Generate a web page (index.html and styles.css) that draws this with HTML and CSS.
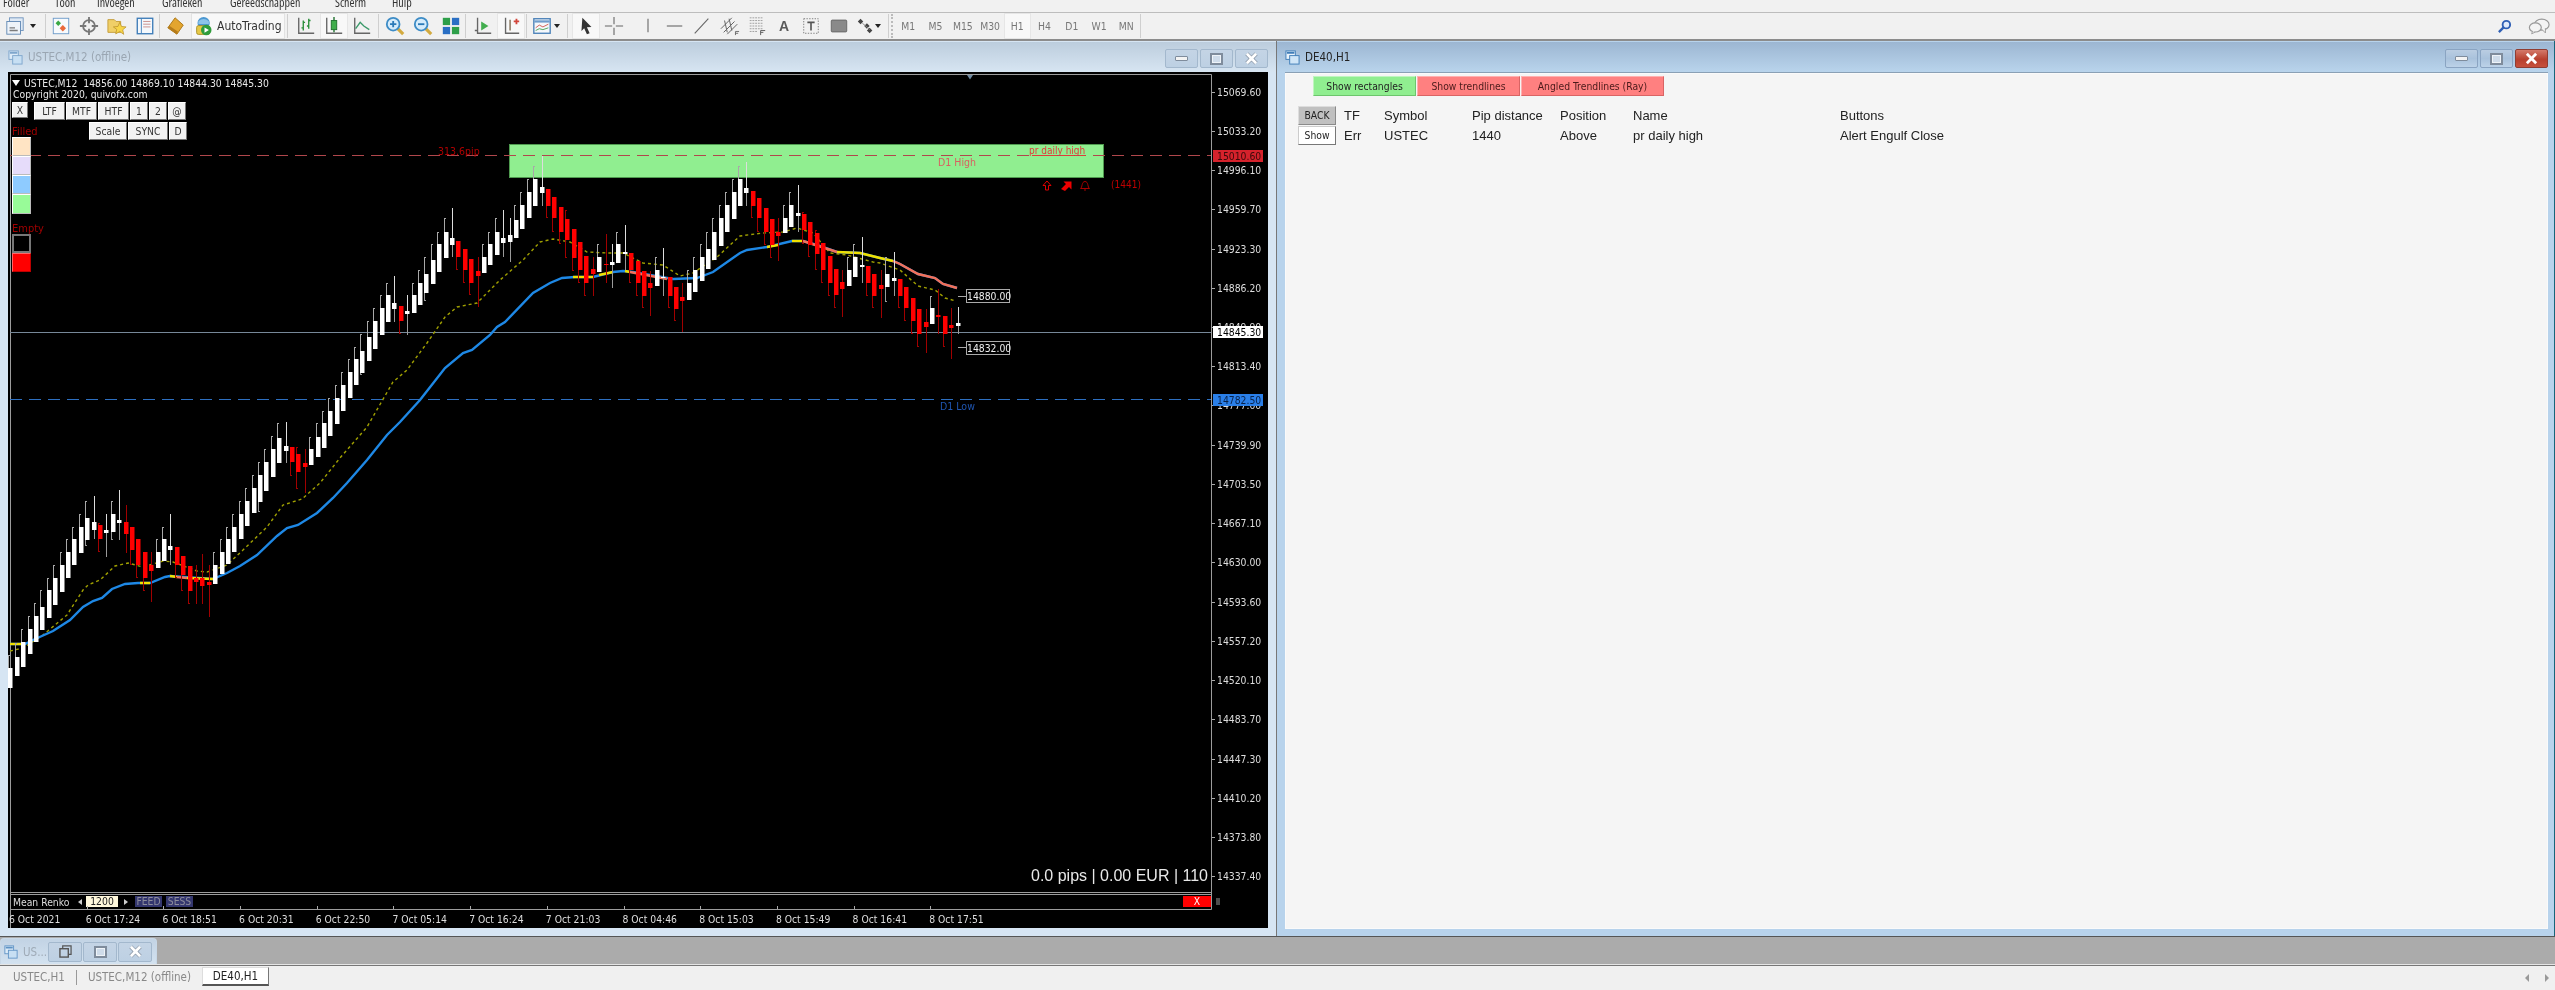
FILE: index.html
```html
<!DOCTYPE html>
<html lang="nl">
<head>
<meta charset="utf-8">
<title>MetaTrader</title>
<link rel="stylesheet" href="styles.css">
</head>
<body>
<div class="app">
  <nav class="menubar"><span class="m1">Folder</span><span class="m2">Toon</span><span class="m3">Invoegen</span><span class="m4">Grafieken</span><span class="m5">Gereedschappen</span><span class="m6">Scherm</span><span class="m7">Hulp</span></nav>

  <div class="toolbar">
    <span class="tb tb-first"><svg viewBox="0 0 22 22"><rect x="5" y="2" width="15" height="14" fill="#dfe9f5" stroke="#6f94bd"/><rect x="2" y="6" width="15" height="14" fill="#eef3f9" stroke="#5f87b3"/><path d="M5 16h9M5 13h6" stroke="#7c7c7c" stroke-width="1.5"/></svg></span>
    <span class="caret"></span><span class="sep s1"></span>
    <span class="tb"><svg viewBox="0 0 22 22"><rect x="2.5" y="2.5" width="17" height="17" fill="#f7fafd" stroke="#6b9ac9"/><path d="M8 5l3 3-3 3-3-3z" fill="#39a845"/><path d="M13 10l3.5 3.5L13 17l-3.500-3.500z" fill="#ea6a3b"/></svg></span>
    <span class="tb"><svg viewBox="0 0 22 22"><circle cx="11" cy="11" r="6.500" fill="none" stroke="#777" stroke-width="2"/><path d="M11 1v7M11 14v7M1 11h7M14 11h7" stroke="#777" stroke-width="2"/></svg></span>
    <span class="tb"><svg viewBox="0 0 22 22"><path d="M1 4h7l2 2h5v12H1z" fill="#f0cf67" stroke="#c39a35"/><path d="M14 7l2 4.500 5 .5-3.700 3.200 1.100 5L14 17l-4.400 2.700 1.100-5L7 12l5-.5z" fill="#f7d548" stroke="#b98f26" stroke-width=".8"/></svg></span>
    <span class="tb"><svg viewBox="0 0 22 22"><rect x="2.500" y="2.500" width="17" height="17" fill="#f4f8fc" stroke="#3f7db8" stroke-width="1.500"/><path d="M7 3v16" stroke="#3f7db8"/><path d="M9 6h8M9 9h8M9 12h8" stroke="#c98a86"/></svg></span>
    <span class="sep s2"></span>
    <span class="tb tb-gold"><svg viewBox="0 0 22 22"><path d="M2 13l8-11 9 8-7 10z" fill="#e3a52f" stroke="#a97413"/><path d="M2 13l10 7 1-3-9-6z" fill="#b67c1b"/></svg></span>
    <span class="auto"><svg viewBox="0 0 24 24"><circle cx="11" cy="8" r="7" fill="#4a97d1"/><path d="M5 6q6-5 12 0v3H5z" fill="#8cc3ea"/><rect x="3" y="11" width="15" height="10" rx="2" fill="#e7c948" stroke="#a58c22"/><circle cx="14" cy="16" r="6" fill="#2f9d3c"/><path d="M12 13l5 3-5 3z" fill="#fff"/></svg><span>AutoTrading</span></span>
    <span class="sep s3"></span>
    <span class="tb"><svg viewBox="0 0 22 22"><path d="M3 2v17h17" fill="none" stroke="#666" stroke-width="1.500"/><path d="M8 5v11M6 13h2M8 7h2M14 3v11M12 11h2M14 5h2" fill="none" stroke="#2a8f3a" stroke-width="1.500"/></svg></span>
    <span class="tb tb-on"><svg viewBox="0 0 22 22"><path d="M3 2v17h17" fill="none" stroke="#666" stroke-width="1.500"/><rect x="8" y="5" width="6" height="10" fill="#3fae4b" stroke="#1d6f2b"/><path d="M11 1v4M11 15v3" stroke="#1d6f2b" stroke-width="1.500"/></svg></span>
    <span class="tb"><svg viewBox="0 0 22 22"><path d="M3 2v17h17" fill="none" stroke="#666" stroke-width="1.500"/><path d="M4 14l5-7 4 4 6 4" fill="none" stroke="#3b9a6a" stroke-width="1.500"/></svg></span>
    <span class="sep s4"></span>
    <span class="tb"><svg viewBox="0 0 22 22"><path d="M14 14l6 6" stroke="#d3aa3f" stroke-width="3.500"/><circle cx="9" cy="9" r="7" fill="#d6ecfb" stroke="#3d8cc6" stroke-width="2"/><path d="M5.500 9h7M9 5.500v7" stroke="#2b7ab8" stroke-width="2"/></svg></span>
    <span class="tb"><svg viewBox="0 0 22 22"><path d="M14 14l6 6" stroke="#d3aa3f" stroke-width="3.500"/><circle cx="9" cy="9" r="7" fill="#d6ecfb" stroke="#3d8cc6" stroke-width="2"/><path d="M5.500 9h7" stroke="#2b7ab8" stroke-width="2"/></svg></span>
    <span class="tb"><svg viewBox="0 0 22 22"><rect x="2" y="2" width="8" height="8" fill="#2d9f49"/><rect x="12" y="2" width="8" height="8" fill="#2a6fc4"/><rect x="2" y="12" width="8" height="8" fill="#2a6fc4"/><rect x="12" y="12" width="8" height="8" fill="#2d9f49"/></svg></span>
    <span class="sep s5"></span>
    <span class="tb"><svg viewBox="0 0 22 22"><path d="M5 2v17h15M2 16h3" fill="none" stroke="#666" stroke-width="1.500"/><path d="M9 6l8 5-8 5z" fill="#42ad4e"/></svg></span>
    <span class="tb tb-on"><svg viewBox="0 0 22 22"><path d="M5 2v17h15" fill="none" stroke="#666" stroke-width="1.500"/><path d="M10 4v12" stroke="#7d6a4e" stroke-width="1.500"/><path d="M14 6h6M17 3v6" stroke="#d2453a" stroke-width="2"/></svg></span>
    <span class="sep s6"></span>
    <span class="tb"><svg viewBox="0 0 22 22"><rect x="2" y="3" width="18" height="16" fill="#f4f7fb" stroke="#4c82b8" stroke-width="1.500"/><path d="M2.500 6h17" stroke="#6d9ccc" stroke-width="2.500"/><path d="M4 13l4-3 4 2 6-3" fill="none" stroke="#d0574d"/><path d="M4 16l4-2 4 1 6-2" fill="none" stroke="#45a555"/></svg></span>
    <span class="caret c2"></span><span class="sep s7"></span>
    <span class="tb tb-on"><svg viewBox="0 0 22 22"><path d="M7 2l10 10-5 .5 3 6.500-3 1-3-6.500-3 3z" fill="#333"/></svg></span>
    <span class="tb"><svg viewBox="0 0 22 22"><path d="M11 1v8M11 13v8M1 11h8M13 11h8" stroke="#666" stroke-width="1.200"/></svg></span>
    <span class="gap6"></span>
    <span class="tc"><svg viewBox="0 0 22 22"><path d="M11 3v15" stroke="#666" stroke-width="1.200"/></svg></span>
    <span class="tc"><svg viewBox="0 0 22 22"><path d="M2 11h17" stroke="#666" stroke-width="1.200"/></svg></span>
    <span class="tc"><svg viewBox="0 0 22 22"><path d="M3 19L18 3" stroke="#666" stroke-width="1.200"/></svg></span>
    <span class="tc"><svg viewBox="0 0 22 22"><path d="M1 14L13 2M4 18L16 6M8 20L19 9M5 5l3 13M10 3l3 13" stroke="#666" stroke-width="1.100"/><path d="M17 17h4M17 17v4M17 19h3" stroke="#666"/></svg></span>
    <span class="tc"><svg viewBox="0 0 22 22"><path d="M3 2h15M3 5h15M3 8h15M3 11h15M3 14h15M3 17h9" stroke="#999" stroke-dasharray="2 1"/><path d="M15 16h5M15 16v5M15 18h3" stroke="#555"/></svg></span>
    <span class="tc tc-text">A</span>
    <span class="tc"><svg viewBox="0 0 22 22"><rect x="3" y="3" width="16" height="16" fill="none" stroke="#777" stroke-dasharray="1.500 1.500"/><path d="M7 7h8M11 7v9" stroke="#555" stroke-width="1.800"/></svg></span>
    <span class="tc"><svg viewBox="0 0 22 22"><rect x="2.500" y="4.500" width="17" height="13" rx="1" fill="#8a8a8a" stroke="#666"/></svg></span>
    <span class="tc"><svg viewBox="0 0 22 22"><path d="M5 3l3 3-3 3-3-3zM12 8l3 3-3 3-3-3zM15 13l3 3-3 3-3-3z" fill="#444"/><path d="M7 8l5 4 3 3" stroke="#888" fill="none"/></svg></span>
    <span class="caret c3"></span><span class="sep s8"></span><span class="grip"></span>
    <span class="tf">M1</span><span class="tf">M5</span><span class="tf">M15</span><span class="tf">M30</span><span class="tf tf-on">H1</span><span class="tf">H4</span><span class="tf">D1</span><span class="tf">W1</span><span class="tf">MN</span>
    <span class="sep s9"></span>
    <span class="tb-right"><svg class="ico-search" viewBox="0 0 16 16"><circle cx="10" cy="6" r="4" fill="#dfeafa" stroke="#2f5fb5" stroke-width="2"/><path d="M7 9l-5 5" stroke="#2f5fb5" stroke-width="2.500"/></svg><svg class="ico-chat" viewBox="0 0 24 18"><ellipse cx="15" cy="7" rx="8" ry="6" fill="#f4f4f4" stroke="#999" stroke-width="1.300"/><path d="M15 12l4 4v-5" fill="#f4f4f4" stroke="#999"/><ellipse cx="8" cy="10" rx="6.500" ry="5" fill="#f4f4f4" stroke="#999" stroke-width="1.300"/><path d="M5 14l-1 3 4-2" fill="#f4f4f4" stroke="#999"/></svg></span>
  </div>

  <main class="workspace">
    <section class="win win-left">
      <header class="titlebar">
        <svg class="winicon" viewBox="0 0 16 16"><rect x="1" y="1" width="10" height="9" fill="#dcebf8" stroke="#7ea6cc"/><rect x="5" y="6" width="10" height="9" fill="#c7dff3" stroke="#7ea6cc"/><path d="M2 3h8" stroke="#7ea6cc" stroke-width="2"/></svg>
        <span class="wintitle dim">USTEC,M12 (offline)</span>
        <span class="wbtns">
          <span class="wbtn"><i class="g-min"></i></span><span class="wbtn"><i class="g-max"></i></span><span class="wbtn"><svg viewBox="0 0 14 14"><path d="M2 2l10 10M12 2L2 12" stroke="#7f8c9c" stroke-width="4.500"/><path d="M2 2l10 10M12 2L2 12" stroke="#fff" stroke-width="3"/></svg></span>
        </span>
      </header>
      <div class="chart">
        <svg class="canvas" id="canvas" viewBox="8 72 1260 856" xmlns="http://www.w3.org/2000/svg">
          <path d="M10.500 928V74.500H1211.500V909.500H10.500M10.500 892.500H1211.500M10.500 894.500H1211.500" fill="none" stroke="#9c9c9c"/>
          <rect x="509.500" y="144.500" width="594" height="33" fill="#90ee90" stroke="#4f9a4f"/>
          <path d="M10 155.500H1211" stroke="#b0474c" stroke-dasharray="12 7"/>
          <path d="M10 399.500H1211" stroke="#2d6fc0" stroke-dasharray="12 7"/>
          <path d="M10 332.500H1211" stroke="#778899"/>
          <path d="M973 75h-6l3 4.500z" fill="#6f8aa3"/>
          <text class="lbl" x="438" y="155" fill="#b00000">313.6pip</text>
          <text class="lbl lbl-hi" x="1029" y="154" fill="#e23a3a" text-decoration="underline">pr daily high</text>
          <text class="lbl" x="938" y="166" fill="#d86060">D1 High</text>
          <text class="lbl" x="940" y="410" fill="#1f55b0">D1 Low</text>
          <text class="lbl lbl-hi" x="1111" y="188" fill="#c00000">(1441)</text>
          <path d="M1047 181l-4 4.500h2.500v4.500h3v-4.500h2.500z" fill="none" stroke="#e00000"/>
          <path d="M1061 189l5-5-2.500-2.500h8v8l-2.500-2.500-4 4z" fill="#f00000"/>
          <path d="M1080.500 188.500c2-1 1-7 4.500-7s2.500 6 4.500 7zM1084 190h2" fill="none" stroke="#a80000"/>
          <path d="M958 296.500h8M958 347.500h8" stroke="#aaa"/>
          <path d="M1217 898v7M1219 898v7" stroke="#999"/>
          <g id="ma-lines"></g>
          <g id="candles"></g>
          <polygon points="12,80 20,80 16,86" fill="#fff"/>
        </svg>

        <div class="legend"><div>USTEC,M12&nbsp; 14856.00 14869.10 14844.30 14845.30</div><div class="copy">Copyright 2020, quivofx.com</div></div>

        <div class="btn-rows">
          <span class="cb cb-x">X</span>
          <div class="cb-col">
            <div class="cb-row"><span class="cb w31">LTF</span><span class="cb w31">MTF</span><span class="cb w31">HTF</span><span class="cb w19">1</span><span class="cb w19">2</span><span class="cb w19">@</span></div>
            <div class="cb-row cb-row2"><span class="cb w39">Scale</span><span class="cb w40">SYNC</span><span class="cb w19">D</span></div>
          </div>
        </div>

        <div class="swatches">
          <div class="sw-title">Filled</div>
          <div class="sw"></div><div class="sw sw-b"></div><div class="sw sw-c"></div><div class="sw sw-d"></div>
          <div class="sw-title sw-title2">Empty</div>
          <div class="sw sw-e"></div><div class="sw sw-f"></div>
        </div>

        <div class="yaxis">
          <span>15069.60</span><span>15033.20</span><span>14996.10</span><span>14959.70</span><span>14923.30</span><span>14886.20</span><span>14849.90</span><span>14813.40</span><span>14777.00</span><span>14739.90</span><span>14703.50</span><span>14667.10</span><span>14630.00</span><span>14593.60</span><span>14557.20</span><span>14520.10</span><span>14483.70</span><span>14447.30</span><span>14410.20</span><span>14373.80</span><span>14337.40</span>
        </div>
        <span class="ptag ptag-red">15010.60</span>
        <span class="ptag ptag-white">14845.30</span>
        <span class="ptag ptag-blue">14782.50</span>
        <span class="vtag vtag-a">14880.00</span>
        <span class="vtag vtag-b">14832.00</span>

        <div class="pnl">0.0 pips | 0.00 EUR | 110</div>

        <div class="subrow">
          <span class="sr-name">Mean Renko</span>
          <span class="arr arr-l"></span>
          <span class="sr-val">1200</span>
          <span class="arr arr-r"></span>
          <span class="sr-tag">FEED</span><span class="sr-tag">SESS</span>
          <span class="sr-x">X</span>
        </div>

        <div class="xaxis">
          <span>6 Oct 2021</span><span>6 Oct 17:24</span><span>6 Oct 18:51</span><span>6 Oct 20:31</span><span>6 Oct 22:50</span><span>7 Oct 05:14</span><span>7 Oct 16:24</span><span>7 Oct 21:03</span><span>8 Oct 04:46</span><span>8 Oct 15:03</span><span>8 Oct 15:49</span><span>8 Oct 16:41</span><span>8 Oct 17:51</span>
        </div>
      </div>
    </section>

    <section class="win win-right">
      <header class="titlebar">
        <svg class="winicon" viewBox="0 0 16 16"><rect x="1" y="1" width="10" height="9" fill="#eaf3fb" stroke="#3f7db8"/><rect x="5" y="6" width="10" height="9" fill="#cfe5f7" stroke="#3f7db8"/><path d="M2 3h8" stroke="#3f7db8" stroke-width="2"/></svg>
        <span class="wintitle">DE40,H1</span>
        <span class="wbtns wbtns-r">
          <span class="wbtn"><i class="g-min"></i></span><span class="wbtn"><i class="g-max"></i></span><span class="wbtn wbtn-close"><svg viewBox="0 0 14 14"><path d="M2 2l10 10M12 2L2 12" stroke="#fff" stroke-width="3"/></svg></span>
        </span>
      </header>
      <div class="client">
        <div class="tabsrow">
          <span class="tg tg-green w103">Show rectangles</span><span class="tg tg-red w103">Show trendlines</span><span class="tg tg-red w143">Angled Trendlines (Ray)</span>
        </div>
        <div class="tbl">
          <span class="tbtn tbtn-back">BACK</span><span>TF</span><span>Symbol</span><span>Pip distance</span><span>Position</span><span>Name</span><span>Buttons</span>
          <span class="tbtn tbtn-show">Show</span><span>Err</span><span>USTEC</span><span>1440</span><span>Above</span><span>pr daily high</span><span>Alert Engulf Close</span>
        </div>
      </div>
    </section>
  </main>

  <div class="dock">
    <div class="mini">
      <svg class="winicon mini-ico" viewBox="0 0 16 16"><rect x="1" y="1" width="10" height="9" fill="#dcebf8" stroke="#5e92c4"/><rect x="5" y="6" width="10" height="9" fill="#c7dff3" stroke="#5e92c4"/><path d="M2 3h8" stroke="#5e92c4" stroke-width="2"/></svg>
      <span class="mini-t">US...</span>
      <span class="wbtn mb"><svg viewBox="0 0 14 14"><rect x="1" y="4" width="9" height="9" fill="none" stroke="#555" stroke-width="1.500"/><path d="M4 4V1h9v9h-3" fill="none" stroke="#555" stroke-width="1.300"/></svg></span><span class="wbtn mb"><i class="g-max"></i></span><span class="wbtn mb"><svg viewBox="0 0 14 14"><path d="M2 2l10 10M12 2L2 12" stroke="#7f8c9c" stroke-width="4.500"/><path d="M2 2l10 10M12 2L2 12" stroke="#fff" stroke-width="3"/></svg></span>
    </div>
  </div>

  <footer class="tabs">
    <span class="tab tab-a">USTEC,H1</span><span class="tab-sep"></span><span class="tab tab-b">USTEC,M12 (offline)</span><span class="tab tab-on">DE40,H1</span>
    <span class="tab-nav"><i class="arr-g arr-gl"></i><i class="arr-g arr-gr"></i></span>
  </footer>
</div>
<script src="chart.js"></script>
</body>
</html>
```

FILE: styles.css
```css
*{box-sizing:border-box}
html,body{margin:0;padding:0;height:100%;overflow:hidden;background:#ababab}
.app{width:2555px;height:990px;display:flex;flex-direction:column;font-family:"DejaVu Sans Condensed","DejaVu Sans",sans-serif;font-stretch:condensed;font-size:10.3px;filter:blur(.35px)}

.menubar{height:13px;flex:none;background:#f1f1f1;border-bottom:1px solid #bdbdbd;position:relative;overflow:hidden;font-family:"Open Sans",sans-serif;font-size:12px;color:#333;line-height:13px}
.menubar span{position:absolute;top:-4px}
.m1{left:3px}.m2{left:55px}.m3{left:97px}.m4{left:162px}.m5{left:230px}.m6{left:335px}.m7{left:392px}

.toolbar{height:28px;flex:none;display:flex;align-items:center;background:#f1f1f1;border-bottom:2px solid #8c8c8c}
.tb{width:28px;height:26px;display:flex;align-items:center;justify-content:center;flex:none}
.tb svg{width:20px;height:20px}
.tb-first{width:26px;margin-left:2px}
.tb-on{background:#f8f8f8;box-shadow:inset 0 0 0 1px #e6e6e6}
.tb-gold{margin-left:2px}
.caret{flex:none;width:10px;height:6px;position:relative}
.caret::after{content:"";position:absolute;left:2px;top:1px;border:3px solid transparent;border-top:4px solid #222}
.sep{flex:none;width:1px;height:24px;background:#cfcfcf}
.s1{margin:0 1px 0 7px}.s2{margin:0}.s3{margin:0 4px 0 2px}.s4{margin:0 2px}.s5{margin:0 3px 0 0}.s6{margin:0 1px}
.s7{margin:0 4px 0 5px}.c2{margin-left:-4px}
.s8{margin:0 2px 0 7px}.s9{margin-left:0}
.auto{flex:none;width:94px;height:26px;margin-left:1px;display:flex;align-items:center;gap:2px;padding-left:3px;background:#f8f8f8;box-shadow:inset 0 0 0 1px #e2e2e2;font-size:12px;color:#333}
.auto svg{width:21px;height:21px;flex:none}
.gap6{width:6px;flex:none}
.tc{flex:none;width:27.300px;height:26px;display:flex;align-items:center;justify-content:center;color:#666}
.tc svg{width:20px;height:20px}
.tc-text{font-family:"Liberation Sans",sans-serif;font-weight:bold;font-size:14px;color:#5a5a5a}
.c3{margin-left:-7px;margin-right:-2px}
.grip{flex:none;width:2px;height:24px;border-left:2px dotted #bbb;margin-right:2px}
.tf{flex:none;width:27.250px;height:26px;display:flex;align-items:center;justify-content:center;color:#777;font-size:10.300px}
.tf-on{background:#f8f8f8;box-shadow:inset 0 0 0 1px #e6e6e6}
.tb-right{margin-left:auto;display:flex;align-items:center;padding-right:5px;gap:16px}
.ico-search{width:15px;height:15px}
.ico-chat{width:22px;height:17px}

.workspace{height:896px;flex:none;display:flex;background:#ababab;border-bottom:1px solid #555}
.win{display:flex;flex-direction:column;padding:1px 0 0}
.win-left{width:1277px;padding:1px 8px 8px 8px;background:#d6e5f3;border-right:1px solid #777}
.win-right{flex:1;padding:1px 6px 7px 8px;background:#b8d3ec;border-right:1px solid #17657a}
.titlebar{height:30px;flex:none;margin:0 -8px;padding:0 8px;display:flex;align-items:center;position:relative}
.win-left .titlebar{background:linear-gradient(#bccddd,#d7e5f2)}
.win-right .titlebar{background:linear-gradient(#9cb6d2,#b9d4ec);margin-right:-6px;padding-right:6px}
.winicon{width:15px;height:15px;flex:none}
.wintitle{margin-left:5px;font-size:11.500px;color:#222}
.wintitle.dim{color:#9aa6b2}
.wbtns{margin-left:auto;display:flex;gap:2px;margin-top:3px}
.wbtn{width:33px;height:19px;display:flex;align-items:center;justify-content:center;background:linear-gradient(#bacde2 0,#a9c2dc 50%,#bcd2e8 100%);border:1px solid #8aa4c2;border-radius:2px}
.wbtn svg{width:13px;height:13px}
.win-left .wbtn{background:linear-gradient(#c4d4e5,#bdd0e3);border-color:#a3b8cd}
.wbtn-close{background:linear-gradient(#d47a6a 0,#b8402e 55%,#c6503c 100%)!important;border-color:#8f3d33}
.g-min{display:block;width:13px;height:5px;background:#f3f3f3;border:1px solid #7f8c9c;border-radius:1px}
.g-max{display:block;width:13px;height:12px;border:2px solid #7f8c9c;background:#cfdcea;box-shadow:inset 0 0 0 1px #eef3f8}

.chart{position:relative;flex:1;background:#000;color:#ddd;overflow:hidden;font-size:10.300px}
.canvas{position:absolute;left:0;top:0;width:1260px;height:856px;display:block}
.lbl{font-family:"DejaVu Sans Condensed","DejaVu Sans",sans-serif;font-stretch:condensed;font-size:10.500px}
.lbl-hi{font-size:10px}
.legend{position:absolute;left:16px;top:6px;line-height:11px;color:#e8e8e8;white-space:nowrap}
.legend .copy{margin-left:-11px}
.btn-rows{position:absolute;left:4px;top:30px;display:flex;gap:6px;align-items:flex-start}
.cb-col{display:flex;flex-direction:column;gap:2px}
.cb-row{display:flex;gap:1px}
.cb-row2{margin-left:55px}
.cb{height:18px;display:flex;align-items:center;justify-content:center;background:#f2f2f2;color:#333;border:1px solid;border-color:#fff #777 #777 #fff;font-size:10.300px}
.cb-x{width:16px;height:16px}
.w31{width:31px}.w19{width:18px}.w39{width:38px}.w40{width:40px}
.swatches{position:absolute;left:4px;top:55px;width:19px}
.sw-title{color:#a00000;font-size:11px;line-height:10px;height:10px;white-space:nowrap}
.sw-title2{margin-top:10px}
.sw{height:19px;background:#ffe4c4;border:1px solid;border-color:#fff #bbb #bbb #fff}
.sw-b{background:#e6dcfa}
.sw-c{background:#8ecbff}
.sw-d{background:#98fb98;height:20px}
.sw-e{background:#000;border:2px solid #777}
.sw-f{background:#f00;border-color:#f66 #b00 #b00 #f66}

.yaxis{position:absolute;left:1209px;top:0;display:flex;flex-direction:column;color:#ddd}
.yaxis span{height:39.240px;display:flex;align-items:center;white-space:nowrap;position:relative}
.yaxis span::before{content:"";position:absolute;left:-5px;top:50%;width:3px;height:1px;background:#aaa}
.ptag{position:absolute;left:1205px;width:50px;height:12px;line-height:12px;padding-left:4px;white-space:nowrap}
.ptag-red{top:78px;background:#d5222c;color:#3a0a0a}
.ptag-white{top:254px;background:#fff;color:#000}
.ptag-blue{top:322px;background:#2a7fe8;color:#08224a}
.vtag{position:absolute;left:958px;width:44px;height:14px;line-height:12px;text-align:center;border:1px solid #aaa;color:#eee;background:#000}
.vtag-a{top:217px}
.vtag-b{top:269px}
.pnl{position:absolute;right:60px;top:794px;font-family:"Liberation Sans",sans-serif;font-size:16px;line-height:20px;color:#e8e8e8;white-space:nowrap}

.subrow{position:absolute;left:5px;top:824px;width:1198px;height:11px;display:flex;align-items:center;color:#ddd;white-space:nowrap}
.sr-name{width:60px}
.arr{width:0;height:0;border:3px solid transparent}
.arr-l{border-right:4px solid #ccc;margin-left:2px}
.sr-val{width:32px;height:11px;line-height:11px;margin-left:4px;background:#fff8dc;color:#222;text-align:center}
.arr-r{border-left:4px solid #ccc;margin-left:6px}
.sr-tag{width:27px;height:11px;line-height:11px;margin-left:4px;background:#33366e;color:#8d8d9c;text-align:center}
.sr-x{margin-left:auto;width:28px;height:11px;line-height:11px;background:#f00;color:#fff;text-align:center}

.xaxis{position:absolute;left:1px;top:837px;display:flex;color:#ddd;height:19px;align-items:center}
.xaxis span{width:76.700px;flex:none;white-space:nowrap;position:relative}
.xaxis span::before{content:"";position:absolute;left:1px;top:-7px;width:1px;height:3px;background:#aaa}
.xaxis span:first-child::before{display:none}

.client{flex:1;background:#f5f5f5;box-shadow:inset 0 0 0 1px #fafafa;padding:3px 0 0 13px;font-family:"Liberation Sans",sans-serif;font-size:13px;color:#222;border-top:1px solid #8aa0b5}
.tabsrow{display:flex;gap:1px;margin-left:15px}
.tg{height:20px;display:flex;align-items:center;justify-content:center;font-family:"DejaVu Sans Condensed","DejaVu Sans",sans-serif;font-size:10.300px;border:1px solid;color:#222}
.tg-green{background:#90ee90;border-color:#bff5bf #6dc56d #6dc56d #bff5bf}
.tg-red{background:#ff8080;border-color:#ffb0b0 #d96464 #d96464 #ffb0b0;color:#4a1a1a}
.w103{width:103px}.w143{width:143px}
.tbl{display:grid;grid-template-columns:38px 48px 88px 88px 73px 207px 300px;grid-auto-rows:20px;align-items:center;margin-top:9px}
.tbl span{white-space:nowrap}
.tbl span:nth-child(7n+2){padding-left:8px}
.tbtn{height:19px;display:flex;align-items:center;justify-content:center;font-family:"DejaVu Sans Condensed","DejaVu Sans",sans-serif;font-size:10.300px;border:1px solid}
.tbtn-back{background:#c0c0c0;border-color:#ddd #8a8a8a #8a8a8a #ddd}
.tbtn-show{background:#fff;border-color:#ccc #777 #777 #ccc}

.dock{height:27px;flex:none;background:#ababab;position:relative}
.mini{width:157px;height:26px;margin-top:1px;display:flex;align-items:center;padding-left:3px;background:linear-gradient(#c2d3e4,#d3e2f0);border-radius:4px 4px 0 0;border:1px solid #c8d8e7;border-bottom:none}
.mini-t{margin-left:5px;width:24px;color:#9fabb7;font-size:11.500px;overflow:hidden;white-space:nowrap}
.mini-ico{width:14px;height:14px}
.mini .mb{width:34px;height:20px;margin-left:1px;background:linear-gradient(#c4d4e5,#bdd0e3);border-color:#a3b8cd}
.mini .mb:first-of-type{margin-left:5px}

.tabs{flex:1;display:flex;align-items:flex-start;background:#f0f0f0;border-top:1px solid #e5e5e5;position:relative;box-shadow:inset 0 1px 0 #777,inset 0 2px 0 #f0f0f0;font-size:11.500px;color:#888;padding-top:2px}
.tab{height:19px;display:flex;align-items:center;white-space:nowrap}
.tab-a{margin-left:13px}
.tab-sep{width:1px;height:15px;margin:3px 0 0 11px;background:#999}
.tab-b{margin-left:11px}
.tab-on{margin-left:11px;width:67px;justify-content:center;background:#fff;color:#222;border:1px solid #ddd;border-bottom:2px solid #555;border-right:1px solid #777}
.tab-nav{margin-left:auto;display:flex;gap:16px;padding:7px 6px 0 0}
.arr-g{display:block;width:0;height:0;border:4px solid transparent}
.arr-gl{border-right:4px solid #999;border-left:0}
.arr-gr{border-left:4px solid #999;border-right:0}
```

FILE: chart.js
```js
// Renko bars: [type, bodyTop, bodyBottom, wickTop, wickBottom] — 0 means no wick on that side
var bars = [
['W',668,688,655,0],['W',657,676,643,0],['W',642,667,629,0],['W',629,654,616,0],['W',616,642,603,0],['W',607,630,590,0],['W',590,618,578,0],['W',578,605,565,0],['W',565,592,552,0],['W',552,578,539,0],
['W',539,565,527,0],['W',527,553,514,0],['W',518,540,501,546],['W',522,530,496,539],['R',525,539,523,552],['W',530,533,514,557],['W',514,532,501,540],['W',520,523,490,540],['R',522,534,505,553],['R',527,550,0,565],
['R',539,565,0,578],['R',552,578,0,591],['R',565,571,552,602],['W',552,568,539,0],['W',539,561,527,0],['W',546,550,514,565],['R',547,565,0,578],['R',556,575,0,591],['R',566,591,0,604],['R',578,582,565,604],
['R',578,586,554,604],['R',582,585,565,617],['W',565,584,552,0],['W',552,574,539,0],['W',539,564,527,0],['W',527,552,514,0],['W',514,539,501,0],['W',501,526,488,0],['W',488,513,475,0],['W',475,502,462,512],
['W',462,491,449,0],['W',449,477,436,0],['W',438,463,423,0],['W',446,451,422,463],['R',447,462,0,476],['R',454,472,447,489],['R',463,467,449,493],['W',449,465,437,0],['W',437,457,423,0],['W',423,448,411,0],
['W',411,436,398,0],['W',398,424,385,0],['W',385,411,372,0],['W',372,398,359,0],['W',359,385,347,0],['W',351,373,334,375],['W',337,361,321,0],['W',321,349,308,0],['W',308,335,295,0],['W',295,322,283,0],
['W',303,309,276,322],['R',306,321,0,334],['W',311,314,295,335],['W',295,313,283,0],['W',283,305,270,0],['W',274,293,257,301],['W',260,284,244,0],['W',244,272,232,0],['W',232,258,218,0],['W',238,245,208,257],
['R',241,257,0,270],['R',249,270,0,283],['R',259,283,0,295],['R',271,276,257,307],['W',257,273,244,0],['W',244,265,232,0],['W',232,255,218,0],['W',238,243,210,257],['W',235,242,218,262],['W',220,238,205,0],
['W',205,229,192,0],['W',192,218,179,0],['W',179,206,166,0],['W',187,193,156,206],['R',189,206,0,218],['R',197,218,0,232],['R',207,232,0,244],['R',219,240,210,258],['R',229,258,0,271],['R',242,270,0,283],
['R',256,283,0,296],['R',269,274,257,296],['W',257,272,244,0],['R',264,265,234,283],['W',262,265,244,288],['W',244,263,232,0],['W',252,254,225,270],['R',253,270,0,283],['R',261,283,0,296],['R',271,296,0,308],
['R',283,288,271,316],['W',270,286,257,0],['W',277,278,248,296],['R',277,296,0,308],['R',287,309,0,321],['R',297,301,283,332],['W',283,300,270,0],['W',270,292,257,0],['W',257,281,244,0],['W',249,269,232,0],
['W',232,260,218,0],['W',218,246,205,0],['W',205,232,192,0],['W',192,219,179,0],['W',179,206,166,0],['W',188,193,162,206],['R',191,206,0,218],['R',198,218,0,232],['R',208,232,0,245],['R',219,245,0,258],
['R',232,236,218,261],['W',218,233,205,0],['W',205,227,192,0],['W',213,216,185,232],['R',214,230,212,244],['R',222,245,0,257],['R',233,254,230,270],['R',243,270,0,283],['R',256,283,0,296],['R',269,295,0,308],
['R',282,289,270,317],['W',270,286,257,0],['W',257,277,244,0],['W',265,267,237,283],['R',266,283,0,296],['R',274,296,0,308],['R',285,289,270,318],['W',274,287,257,302],['W',278,281,252,296],['R',279,296,0,308],
['R',287,308,0,321],['R',298,321,0,334],['R',309,334,0,347],['R',322,327,309,353],['W',308,324,296,0],['R',315,317,289,334],['R',316,334,0,347],['R',325,328,308,359],['W',323,326,307,334]
];

var blue = "10,644 25,644 33,640 53,631 70,620 83,607 93,601 102,598 112,589 125,584 138,583 150,583 165,577 170,576 213,579 227,573 240,566 257,555 277,536 287,528 298,525 317,513 333,498 347,483 367,460 387,435 400,422 420,400 445,368 463,353 472,350 490,335 497,327 505,322 533,293 550,283 562,278 575,277 593,277 613,272 623,271 633,272 673,279 697,278 713,272 740,253 747,250 767,247 792,241 803,241 817,245 837,252 860,253 880,258 893,261 900,264 918,274 935,278 943,284 957,288";
var olive = "10,651 23,648 43,635 67,615 83,590 88,585 100,580 115,566 128,563 143,567 163,561 173,562 197,571 207,572 227,565 243,550 267,527 283,505 302,499 320,483 340,458 367,427 393,382 407,370 427,343 445,317 457,307 477,303 500,280 523,260 540,242 553,239 570,242 587,252 607,253 623,253 643,263 663,265 680,276 693,273 717,257 740,236 763,233 783,232 797,228 813,233 830,253 847,255 873,262 880,263 900,270 918,286 935,290 945,298 956,301";
var overlays = [
  ["#f0e000","10,644 25,644"],["#f0e000","140,583 150,583"],["#f0e000","170,576 177,577"],["#f2705a","177,577 187,578"],["#f0e000","187,578 213,579"],
  ["#f0e000","573,277 593,277"],["#f0e000","599,275 613,272"],["#f0e000","625,271 630,272"],["#f2705a","630,272 667,279"],
  ["#f0e000","767,247 778,245"],["#f0e000","792,241 803,241"],["#f2705a","803,241 837,252"],["#f0e000","837,252 860,253 880,258 893,261"],["#f2705a","893,261 900,264 918,274 935,278 943,284 957,288"]
];

var NS = "http://www.w3.org/2000/svg";
function el(parent, name, attrs) {
  var n = document.createElementNS(NS, name);
  for (var k in attrs) n.setAttribute(k, attrs[k]);
  parent.appendChild(n);
  return n;
}

var lines = document.getElementById("ma-lines");
el(lines, "polyline", {points: olive, fill: "none", stroke: "#a0a000", "stroke-width": 1.4, "stroke-dasharray": "3 3"});
el(lines, "polyline", {points: blue, fill: "none", stroke: "#1e88e5", "stroke-width": 2.4});
overlays.forEach(function (o) {
  el(lines, "polyline", {points: o[1], fill: "none", stroke: o[0], "stroke-width": 2.4});
});

var g = document.getElementById("candles");
function seg(x, y1, y2, c) { el(g, "rect", {x: x, y: y1, width: 1, height: y2 - y1, fill: c}); }

bars.forEach(function (b, k) {
  var cx = Math.round(10.3 + 6.4 * k);
  var white = b[0] === "W", full = b[2] - b[1] > 12;
  var up = white ? (full ? "#a8a8a8" : "#dddddd") : "#a00000";
  var dn = white ? "#9a9a9a" : "#a00000";
  var wx = full ? cx - 2 : cx;
  if (b[3]) {
    seg(wx, b[3], b[1], up);
    if (full) seg(wx + 1, b[3], b[3] + 1, up);
  }
  if (b[4]) {
    seg(wx, b[2], b[4], dn);
    if (full) seg(wx + 1, b[4] - 1, b[4], dn);
  }
  el(g, "rect", {x: cx - 2, y: b[1], width: 4.5, height: Math.max(b[2] - b[1], 1), fill: white ? "#ffffff" : "#ff0000"});
});
```
